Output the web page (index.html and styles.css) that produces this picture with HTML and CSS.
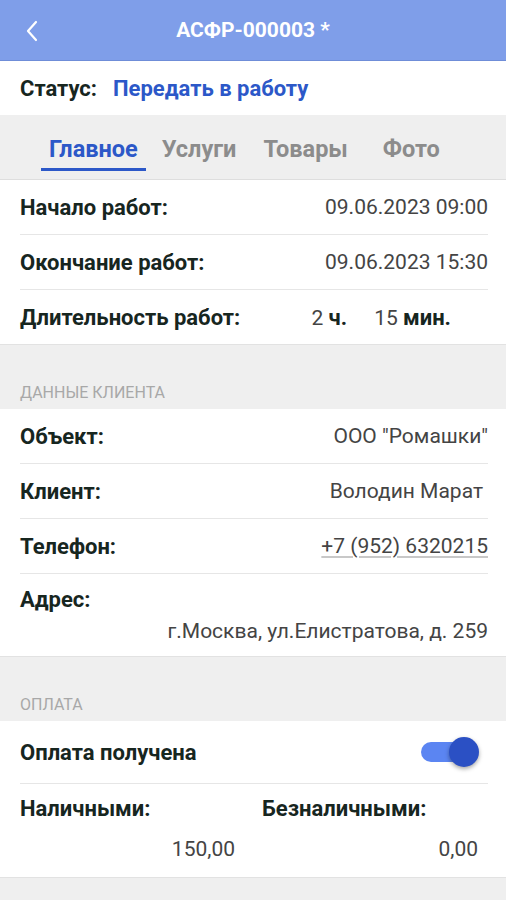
FILE: index.html
```html
<!DOCTYPE html>
<html lang="ru">
<head>
    <meta charset="UTF-8">
    <meta name="viewport" content="width=device-width, initial-scale=1.0">
    <title>АСФР-000003</title>
    <link rel="stylesheet" href="styles.css">
</head>
<body>
    <header class="topbar">
        <svg class="back" width="14" height="22" viewBox="0 0 14 22">
            <path d="M11 2 L3 11 L11 20" fill="none" stroke="#fff" stroke-width="2.2" stroke-linecap="round" stroke-linejoin="round"/>
        </svg>
        <h1>АСФР-000003 *</h1>
    </header>

    <div class="status">
        <span class="status-label">Статус:</span>
        <span class="status-value">Передать в работу</span>
    </div>

    <nav class="tabs">
        <span class="tab active">Главное</span>
        <span class="tab">Услуги</span>
        <span class="tab">Товары</span>
        <span class="tab">Фото</span>
    </nav>

    <section class="card">
        <div class="row">
            <span class="label">Начало работ:</span>
            <span class="value">09.06.2023 09:00</span>
        </div>
        <div class="row">
            <span class="label">Окончание работ:</span>
            <span class="value">09.06.2023 15:30</span>
        </div>
        <div class="row">
            <span class="label">Длительность работ:</span>
            <span class="duration">
                <span>2 <b>ч.</b></span>
                <span>15 <b>мин.</b></span>
            </span>
        </div>
    </section>

    <div class="section-title">Данные клиента</div>

    <section class="card">
        <div class="row">
            <span class="label">Объект:</span>
            <span class="value">ООО "Ромашки"</span>
        </div>
        <div class="row">
            <span class="label">Клиент:</span>
            <span class="value short">Володин Марат</span>
        </div>
        <div class="row">
            <span class="label">Телефон:</span>
            <span class="value phone">+7 (952) 6320215</span>
        </div>
        <div class="row address">
            <span class="label">Адрес:</span>
            <span class="value">г.Москва, ул.Елистратова, д. 259</span>
        </div>
    </section>

    <div class="section-title">Оплата</div>

    <section class="card">
        <div class="row toggle-row">
            <span class="label">Оплата получена</span>
            <span class="switch"><span class="thumb"></span></span>
        </div>
        <div class="pay">
            <div class="pay-col">
                <span class="label">Наличными:</span>
                <span class="value">150,00</span>
            </div>
            <div class="pay-col">
                <span class="label">Безналичными:</span>
                <span class="value">0,00</span>
            </div>
        </div>
    </section>
</body>
</html>
```

FILE: styles.css
```css
body {
    font-family: Roboto, "Noto Sans", sans-serif;
    margin: 0;
    padding: 0;
    background: #efefef;
    color: #17261f;
}

.topbar {
    height: 60px;
    background: #7f9ee9;
    border-bottom: 1px solid #6f8dd8;
    display: flex;
    align-items: center;
    justify-content: center;
    position: relative;
}

.topbar h1 {
    margin: 0;
    color: #fff;
    font-size: 21px;
    font-weight: 700;
}

.back {
    position: absolute;
    left: 25px;
    top: 20px;
}

.status {
    background: #fff;
    height: 54px;
    display: flex;
    align-items: center;
    padding: 0 20px;
    font-size: 22px;
    font-weight: 700;
    gap: 16px;
}

.status-value {
    color: #2c58c8;
}

.tabs {
    height: 64px;
    display: flex;
    align-items: flex-end;
    padding-left: 41px;
    border-bottom: 1px solid #dedede;
    font-size: 23.5px;
    font-weight: 700;
}

.tab {
    color: #8c8c8c;
    padding: 0 0 5px;
    margin-bottom: 8px;
    border-bottom: 3px solid transparent;
    line-height: 28px;
    margin-right: 27px;
}

.tab:nth-child(3) {
    margin-right: 35px;
}

.tab.active {
    color: #2c58c8;
    padding: 0 8px 5px;
    border-bottom-color: #2c58c8;
    margin-right: 16px;
}

.card {
    background: #fff;
    padding: 0 18px 0 20px;
    border-bottom: 1px solid #e2e2e2;
}

.row {
    height: 54px;
    display: flex;
    align-items: center;
    justify-content: space-between;
    border-bottom: 1px solid #e6e6e6;
}

.row:last-child {
    border-bottom: none;
}

.label {
    font-size: 22px;
    font-weight: 700;
}

.value {
    font-size: 21px;
    color: #444;
}

.value.short {
    margin-right: 5px;
}

.phone {
    text-decoration: underline;
    text-decoration-color: #c8c8c8;
    text-underline-offset: 3px;
}

.duration {
    font-size: 21px;
    color: #444;
    display: flex;
    gap: 27px;
    margin-right: 37px;
}

.duration b {
    font-size: 22px;
    color: #17261f;
}

.row.address {
    height: 82px;
    flex-direction: column;
    align-items: stretch;
    justify-content: center;
    gap: 7px;
}

.row.address .value {
    text-align: right;
}

.section-title {
    height: 64px;
    display: flex;
    align-items: flex-end;
    padding: 0 20px 7px;
    box-sizing: border-box;
    font-size: 16px;
    line-height: 19px;
    color: #a8a8a8;
    text-transform: uppercase;
}

.toggle-row {
    height: 62px;
}

.switch {
    position: relative;
    width: 47px;
    height: 20px;
    border-radius: 10px;
    background: #5b85f2;
    margin-right: 20px;
}

.thumb {
    position: absolute;
    right: -11px;
    top: -5px;
    width: 30px;
    height: 30px;
    border-radius: 50%;
    background: #2b50c4;
    box-shadow: 0 2px 4px rgba(0, 0, 0, 0.35);
}

.pay {
    display: flex;
    height: 93px;
}

.pay-col {
    display: flex;
    flex-direction: column;
    padding-top: 12px;
    gap: 16px;
}

.pay-col:first-child {
    width: 215px;
    margin-right: 27px;
}

.pay-col:last-child {
    flex: 1;
    margin-right: 10px;
}

.pay-col .value {
    text-align: right;
}
```
